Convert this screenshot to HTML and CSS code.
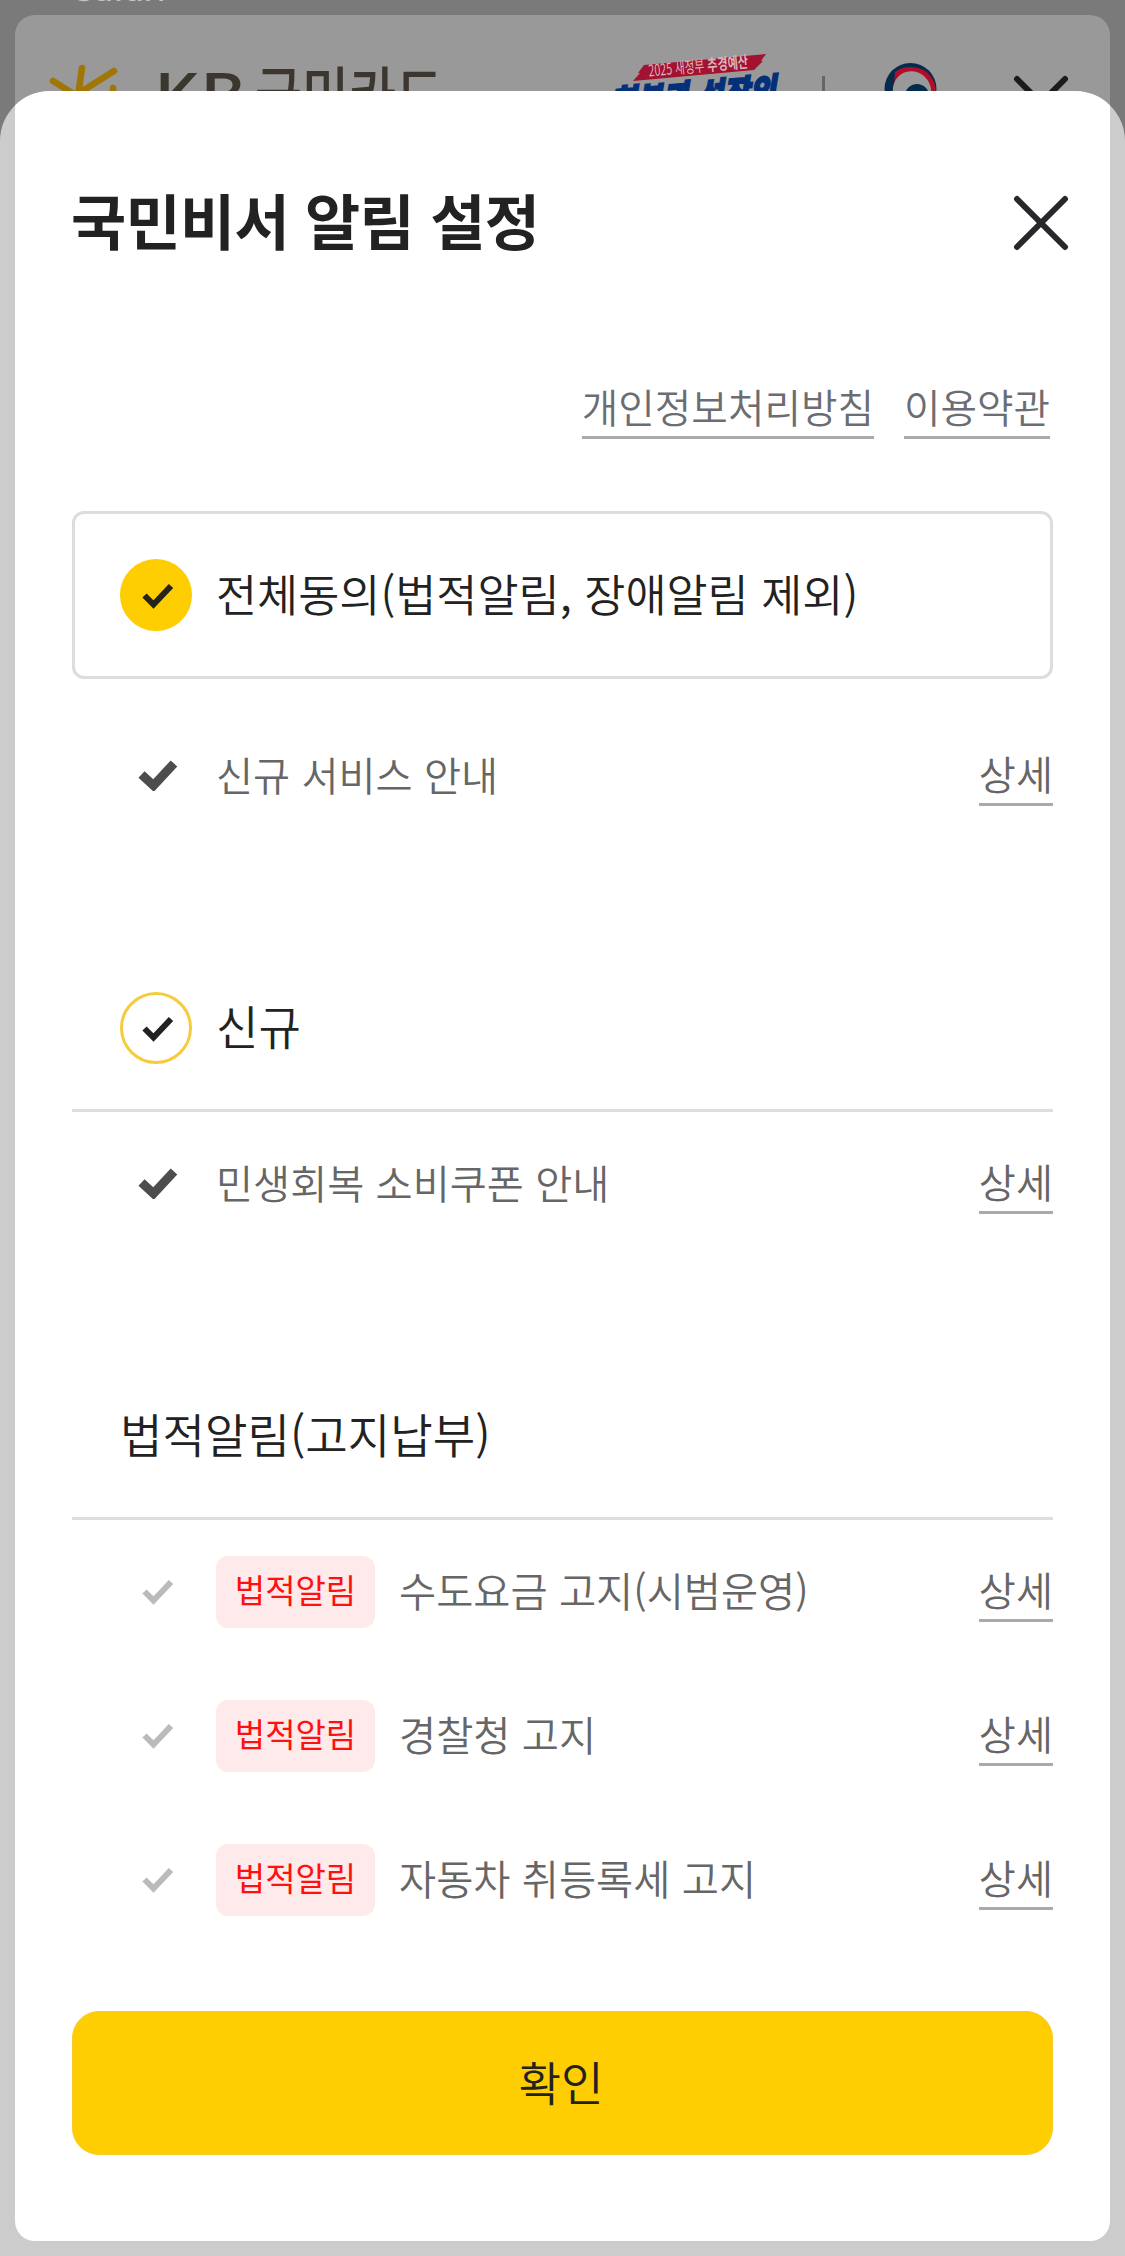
FILE: index.html
```html
<!DOCTYPE html>
<html lang="ko">
<head>
    <meta charset="UTF-8">
    <meta name="viewport" content="width=device-width, initial-scale=1.0">
    <title>국민비서 알림 설정</title>
    <link rel="stylesheet" href="styles.css">
</head>
<body>

    <!-- Page behind the sheet -->
    <div class="backdrop">
        <div class="app-name">Safari</div>
        <div class="backdrop-card">
            <svg class="backdrop-header" width="1095" height="100" viewBox="15 15 1095 100">
                <g stroke="#a07606" stroke-width="6.5" stroke-linecap="round">
                    <path d="M53 81L77 96M82 68L78 96M114 71L76 95M113 88V98"/>
                </g>
                <g class="brand">
                    <text class="brand-en" x="154" y="118" textLength="92" lengthAdjust="spacingAndGlyphs">KB</text>
                    <text class="brand-ko" x="255" y="119" textLength="188" lengthAdjust="spacingAndGlyphs">국민카드</text>
                </g>
                <path d="M644 65L766 54L761 61L763 61L754 70L633 81L640 73L638 73Z" fill="#a31230"/>
                <g transform="translate(649 76.500) rotate(-5.3)">
                    <text class="slogan-small" x="0" y="0" textLength="56" lengthAdjust="spacingAndGlyphs">2025 새정부</text>
                    <text class="slogan-small bold" x="59" y="0" textLength="41" lengthAdjust="spacingAndGlyphs">추경예산</text>
                </g>
                <g transform="translate(610 117) rotate(-4.5) skewX(-14)">
                    <text class="slogan" x="0" y="0" textLength="166" lengthAdjust="spacingAndGlyphs">회복과 성장의</text>
                </g>
                <rect x="822" y="76" width="3" height="24" fill="#64666b"/>
                <circle cx="910.500" cy="89" r="26" fill="#042a4d"/>
                <path d="M895 72C908 62 936 66 936 94L925 112L893 100Z" fill="#b00d29"/>
                <ellipse cx="912" cy="91" rx="19" ry="20" fill="#999" transform="rotate(-25 912 91)"/>
                <circle cx="917" cy="96" r="12" fill="#042a4d"/>
                <path d="M1017 79L1065 127M1065 79L1017 127" stroke="#1a1b1d" stroke-width="6" stroke-linecap="round"/>
            </svg>
        </div>
    </div>

    <div class="sheet">
        <div class="sheet-body">
            <div class="sheet-header">
                <h2>국민비서 알림 설정</h2>
                <svg class="close" width="60" height="60" viewBox="0 0 60 60">
                    <path d="M6 6L54 54M54 6L6 54" stroke="#26282b" stroke-width="6" stroke-linecap="round"/>
                </svg>
            </div>

            <div class="links">
                <a class="link">개인정보처리방침</a>
                <a class="link">이용약관</a>
            </div>

            <div class="agree-all">
                <span class="circle filled">
                    <svg width="32" height="26" viewBox="0 0 32 26"><path d="M2.500 12.500L11.500 21.500L29 3" fill="none" stroke="#26231c" stroke-width="6"/></svg>
                </span>
                <span class="head-label">전체동의(법적알림, 장애알림 제외)</span>
            </div>

            <div class="group first">
                <div class="row">
                    <svg class="check on" width="40" height="32" viewBox="0 0 40 32"><path d="M3.500 15.500L15.500 26.500L36 4.500" fill="none" stroke="#4d4d4d" stroke-width="9"/></svg>
                    <span class="label">신규 서비스 안내</span>
                    <a class="link detail">상세</a>
                </div>
            </div>

            <div class="group">
                <div class="group-head">
                    <span class="circle">
                        <svg width="32" height="26" viewBox="0 0 32 26"><path d="M2.500 12.500L11.500 21.500L29 3" fill="none" stroke="#222" stroke-width="6"/></svg>
                    </span>
                    <span class="head-label">신규</span>
                </div>
                <div class="row">
                    <svg class="check on" width="40" height="32" viewBox="0 0 40 32"><path d="M3.500 15.500L15.500 26.500L36 4.500" fill="none" stroke="#4d4d4d" stroke-width="9"/></svg>
                    <span class="label">민생회복 소비쿠폰 안내</span>
                    <a class="link detail">상세</a>
                </div>
            </div>

            <div class="group">
                <div class="group-head">
                    <span class="head-label">법적알림(고지납부)</span>
                </div>
                <div class="row">
                    <svg class="check" width="32" height="26" viewBox="0 0 32 26"><path d="M2.500 12.500L11.500 21.500L29 3" fill="none" stroke="#bbb" stroke-width="6"/></svg>
                    <span class="badge">법적알림</span>
                    <span class="label">수도요금 고지(시범운영)</span>
                    <a class="link detail">상세</a>
                </div>
                <div class="row">
                    <svg class="check" width="32" height="26" viewBox="0 0 32 26"><path d="M2.500 12.500L11.500 21.500L29 3" fill="none" stroke="#bbb" stroke-width="6"/></svg>
                    <span class="badge">법적알림</span>
                    <span class="label">경찰청 고지</span>
                    <a class="link detail">상세</a>
                </div>
                <div class="row">
                    <svg class="check" width="32" height="26" viewBox="0 0 32 26"><path d="M2.500 12.500L11.500 21.500L29 3" fill="none" stroke="#bbb" stroke-width="6"/></svg>
                    <span class="badge">법적알림</span>
                    <span class="label">자동차 취등록세 고지</span>
                    <a class="link detail">상세</a>
                </div>
            </div>

            <button type="button">확인</button>
        </div>
    </div>

</body>
</html>
```
FILE: styles.css
```css
* {
    box-sizing: border-box;
}

body {
    margin: 0;
    height: 2256px;
    position: relative;
    overflow: hidden;
    font-family: "Noto Sans CJK KR", sans-serif;
    font-weight: 350;
    color: #222;
}

/* page behind */
.backdrop {
    position: absolute;
    top: 0;
    left: 0;
    width: 100%;
    height: 200px;
    padding: 15px 15px 0;
    background-color: #7a7a7a;
}

.app-name {
    position: absolute;
    top: -31px;
    left: 73px;
    font-family: Inter, sans-serif;
    font-size: 33px;
    line-height: 40px;
    font-weight: 500;
    color: #c4c4c4;
}

.backdrop-card {
    height: 185px;
    background-color: #999;
    border-radius: 20px 20px 0 0;
}

.backdrop-header {
    display: block;
}

.brand {
    fill: #3b372e;
}

.brand-en {
    font-size: 61px;
    font-weight: 500;
}

.brand-ko {
    font-size: 62px;
    font-weight: 500;
}

.slogan-small {
    font-size: 16px;
    fill: #d9b3bb;
    font-weight: 400;
}

.slogan-small.bold {
    font-weight: 700;
}

.slogan {
    font-size: 36px;
    font-weight: 900;
    fill: #04307a;
    stroke: #04307a;
    stroke-width: 2px;
}

/* bottom sheet */
.sheet {
    position: absolute;
    top: 91px;
    left: 0;
    width: 100%;
    height: 2165px;
    padding: 0 15px 15px;
    background-color: #ccc;
    border-radius: 50px 50px 0 0;
    overflow: hidden;
}

.sheet-body {
    height: 2150px;
    padding: 87px 57px 0;
    background-color: #fff;
    border-radius: 0 0 20px 20px;
}

.sheet-header {
    display: flex;
    justify-content: space-between;
    align-items: center;
    height: 90px;
    margin-right: -18px;
}

h2 {
    margin: 0 0 0 -1px;
    padding-bottom: 8px;
    font-size: 60px;
    line-height: 82px;
    font-weight: 700;
    letter-spacing: -0.7px;
}

.links {
    display: flex;
    justify-content: flex-end;
    gap: 30px;
    margin-top: 111px;
    padding-right: 3px;
}

.link {
    font-size: 39.700px;
    line-height: 54px;
    height: 60px;
    white-space: nowrap;
    color: #6b6d72;
    border-bottom: 3px solid #aaa;
}

.agree-all {
    display: flex;
    align-items: center;
    height: 168px;
    margin-top: 72px;
    padding-left: 45px;
    border: 3px solid #ddd;
    border-radius: 12px;
}

.circle {
    display: flex;
    align-items: center;
    justify-content: center;
    width: 72px;
    height: 72px;
    margin-right: 24px;
    padding: 1px 0 0 3px;
    border: 3px solid #f6cb3c;
    border-radius: 50%;
}

.circle.filled {
    background-color: #fecd02;
    border-color: #fecd02;
}

.head-label {
    padding-bottom: 4px;
    font-size: 44.700px;
    line-height: 68px;
    white-space: nowrap;
}

.group-head .head-label {
    padding-bottom: 6px;
    font-size: 46.200px;
    line-height: 66px;
}

.group.first {
    margin-top: 25px;
}

.group-head {
    display: flex;
    align-items: center;
    height: 264px;
    padding: 144px 0 45px 48px;
    border-bottom: 3px solid #ddd;
}

.row {
    display: flex;
    align-items: center;
    height: 144px;
    padding-left: 48px;
}

.check {
    flex: none;
    margin: 0 42px 0 22px;
}

.check.on {
    margin: 0 38px 2px 18px;
}

.label {
    flex: 1;
    padding-bottom: 5px;
    font-size: 40.300px;
    line-height: 55px;
    color: #666;
}

.badge + .label {
    font-size: 40.400px;
}

.badge {
    width: 159px;
    height: 72px;
    margin-right: 24px;
    border-radius: 12px;
    background-color: #feeaea;
    color: #f11;
    font-size: 33px;
    line-height: 67px;
    font-weight: 400;
    text-align: center;
}

.detail {
    font-size: 40.300px;
    color: #666;
}

button {
    display: block;
    width: 100%;
    height: 144px;
    margin-top: 59px;
    padding: 0 3px 5px 0;
    background-color: #fecd02;
    border: 1px solid #f9cb28;
    border-radius: 27px;
    color: #222;
    font-family: inherit;
    font-size: 46.300px;
    font-weight: 350;
}
```
